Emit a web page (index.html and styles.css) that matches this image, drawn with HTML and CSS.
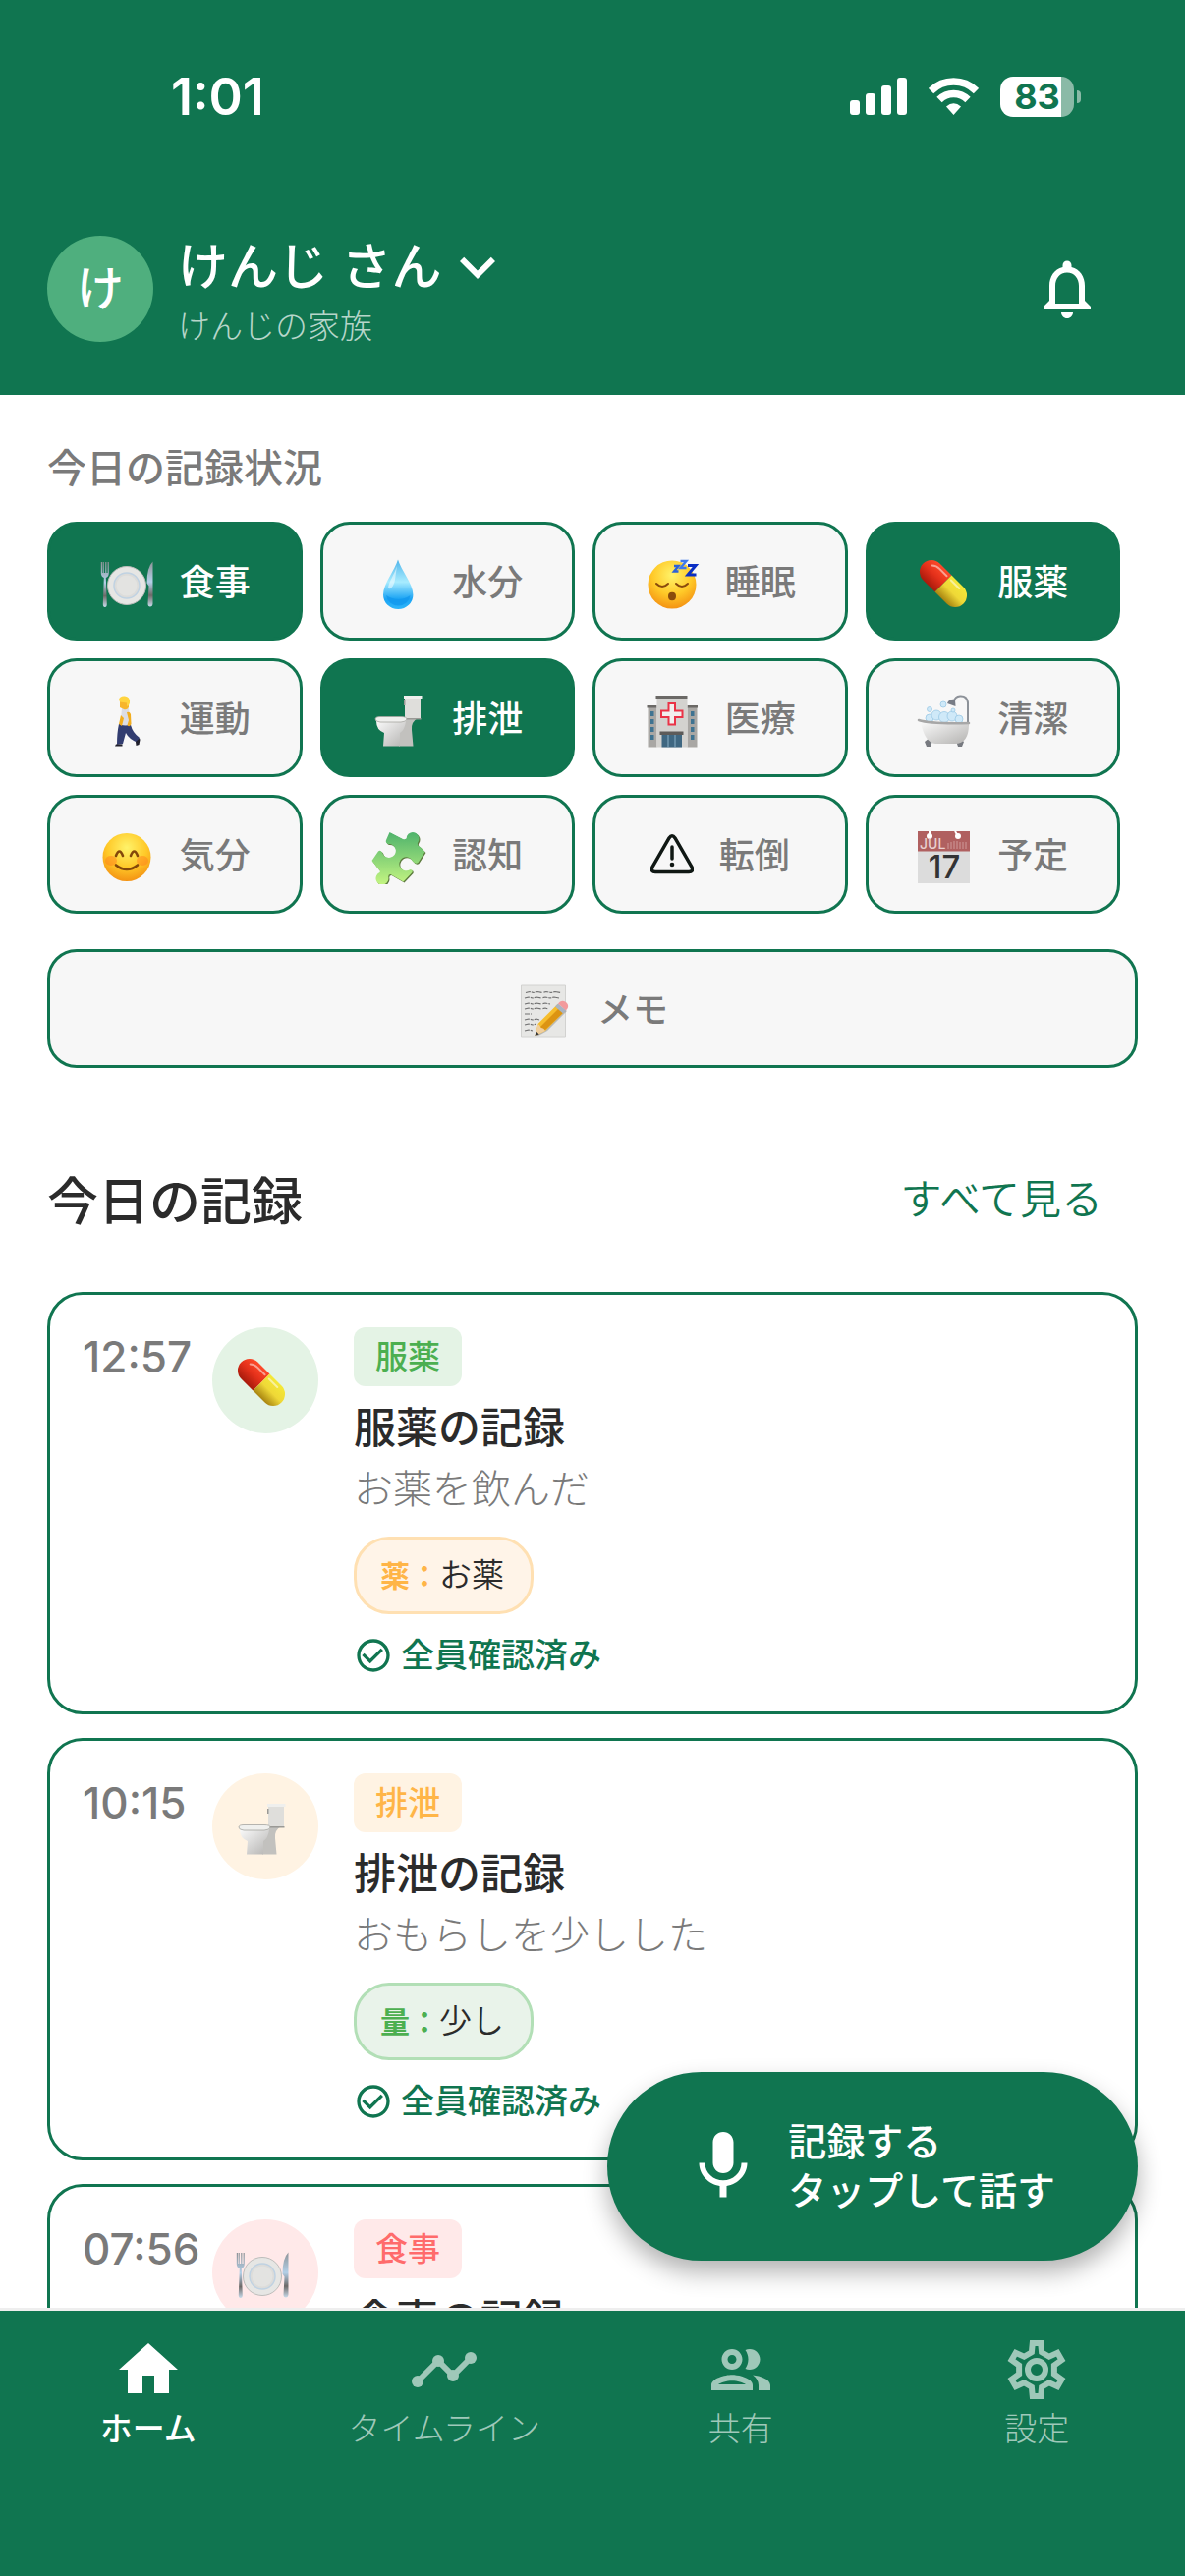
FILE: index.html
```
<!DOCTYPE html>
<html lang="ja">
<head>
  <meta charset="UTF-8">
  <meta name="viewport" content="width=device-width, initial-scale=1.0">
  <title>今日の記録</title>
  <link rel="stylesheet" href="styles.css">
</head>
<body>

  <!-- アイコン定義 -->
  <svg class="defs" aria-hidden="true">
    <defs>
      <linearGradient id="gWater" x1="0" y1="0" x2="0" y2="1">
        <stop offset="0" stop-color="#4fb4ea"/><stop offset="0.45" stop-color="#a8ecff"/><stop offset="0.8" stop-color="#1ba4f4"/><stop offset="1" stop-color="#2fb6fa"/>
      </linearGradient>
      <radialGradient id="gFace" cx="0.5" cy="0.3" r="0.75">
        <stop offset="0" stop-color="#fff36a"/><stop offset="0.55" stop-color="#ffc928"/><stop offset="1" stop-color="#f28a10"/>
      </radialGradient>
      <linearGradient id="gRed" x1="0" y1="0" x2="0" y2="1">
        <stop offset="0" stop-color="#ff4a2a"/><stop offset="0.5" stop-color="#e3301a"/><stop offset="1" stop-color="#a81a0c"/>
      </linearGradient>
      <linearGradient id="gYellow" x1="0" y1="0" x2="0" y2="1">
        <stop offset="0" stop-color="#f4e838"/><stop offset="0.5" stop-color="#efd837"/><stop offset="1" stop-color="#a88410"/>
      </linearGradient>
      <linearGradient id="gWhite" x1="0" y1="0" x2="1" y2="1">
        <stop offset="0" stop-color="#fafafa"/><stop offset="1" stop-color="#b4b3b1"/>
      </linearGradient>
      <linearGradient id="gSteel" x1="0" y1="0" x2="0" y2="1">
        <stop offset="0" stop-color="#8d9397"/><stop offset="0.45" stop-color="#b4d0e8"/><stop offset="0.75" stop-color="#6d6a68"/><stop offset="1" stop-color="#c8dbea"/>
      </linearGradient>
      <linearGradient id="gPuzzle" x1="0" y1="0" x2="0" y2="1">
        <stop offset="0" stop-color="#4fb36c"/><stop offset="1" stop-color="#c4f582"/>
      </linearGradient>
    </defs>

    <symbol id="meal" viewBox="0 0 56 60">
      <circle cx="28" cy="34" r="19.5" fill="#e6e6e4" stroke="#bdbdbb"/>
      <circle cx="28" cy="34" r="13" fill="#dcdcda" stroke="#c0d2e2" stroke-width="1.5"/>
      <circle cx="28" cy="34" r="10.5" fill="#e3e3e1"/>
      <path d="M1.8 10v11q0 4 3 5l-1 27q0 3 2 3t2-3l-1-27q3-1 3-5V10h-1.2v11H7.4V10H6.2v11H4.8V10H3.6v11H3V10z" fill="url(#gSteel)"/>
      <path d="M54.5 9.5q-6 6-6 22l2 3-1 18q0 3 2.4 3t2.6-3z" fill="url(#gSteel)"/>
    </symbol>
    <symbol id="water" viewBox="0 0 56 60">
      <path d="M27 7.5C24 18 12 32 12 43.5a15.2 14.5 0 0 0 30.4 0C42.4 32 30 18 27 7.5z" fill="url(#gWater)"/>
      <path d="M26 14c-3 9-8 16-9 22 2 4 6-2 7-8z" fill="#fff" opacity="0.5"/>
      <path d="M15 44a12.4 12 0 0 0 24.6 0q-12 8-24.6 0z" fill="#0f96ec" opacity="0.7"/>
    </symbol>
    <symbol id="sleep" viewBox="0 0 56 60">
      <circle cx="28" cy="33" r="24.5" fill="url(#gFace)"/>
      <g fill="none" stroke="#8a4b0c" stroke-width="2" stroke-linecap="round">
        <path d="M12 32q6 6 12 0M32 32q6 6 12 0"/>
      </g>
      <ellipse cx="28" cy="45" rx="4" ry="4.2" fill="#8a4b0c"/>
      <g fill="none" stroke-width="2.4">
        <path stroke="#2d62d8" d="M30 14h4.5l-4.5 5.5h4.5"/>
        <path stroke="#3f78ec" d="M36.5 9h6l-6 7h6"/>
        <path stroke="#0b2fc4" stroke-width="3" d="M44 13.5h8l-8 9.5h8.5"/>
      </g>
    </symbol>
    <symbol id="pill" viewBox="0 0 56 60">
      <g transform="rotate(45 27 32)">
        <path d="M27 20H10a12 12 0 0 0 0 24h17z" fill="url(#gRed)"/>
        <path d="M27 20h17a12 12 0 0 1 0 24H27z" fill="url(#gYellow)"/>
        <path d="M6 27q3-3 8-3h10M30 24h12" fill="none" stroke="#fff" stroke-width="2" stroke-linecap="round" opacity="0.5"/>
      </g>
    </symbol>
    <symbol id="walk" viewBox="0 0 56 60">
      <path d="M20 36l12 1q2 8 9 13l-2 5q-9-4-12-10l-3 11-6 1q0-12 2-21z" fill="#323d70"/>
      <path d="M17 56.5h6.5v2H16zM37 54l4-3.5.5 1.5-1 5-3 1z" fill="#20202c"/>
      <path d="M23 20q5-2 7 0l2.5 16.5q-6 2-11 0z" fill="#dcdde4"/>
      <path d="M28 24q3-1 4 2l.5 10q-2 4-4 1l1.5-5zM22 27l-2 9 3 2 2-8z" fill="#f2ad1e"/>
      <path d="M21 12h9v7q-2 3-5 2l-4-2z" fill="#f7b52c"/>
      <path d="M20 11q1-4 6-3.5 5.5.5 5 7-1 4-3 3v-3l-7-1z" fill="#ffd43f"/>
    </symbol>
    <symbol id="toilet" viewBox="0 0 56 60">
      <path d="M30 30h17q-7 4-6 12l1.5 16.5H28z" fill="#c2c1be"/>
      <path d="M34 9h16v21.5H34z" fill="#dfdedb"/>
      <path d="M33 7h18.5v3H33z" fill="#efefed"/>
      <path d="M33 30h17.5v1.5H33zM33 12h1.5v5H33z" fill="#9a9995"/>
      <path d="M5 33q0 9 8 12l-1 13.5h17V45q5-3 6-12z" fill="url(#gWhite)"/>
      <path d="M4 31q0-2.5 5-2.5h21q6 0 6 2.5t-6 3H9q-5-.5-5-3z" fill="#f0f0ee" stroke="#a5a4a0" stroke-width="0.8"/>
    </symbol>
    <symbol id="hospital" viewBox="0 0 56 60">
      <path d="M3.5 19h9v40.5h-9zM43.5 19h10v40.5h-10z" fill="#a9a7a4"/>
      <path d="M2.5 17h10v2.5h-10zM43.5 17h10.5v2.5H43.5zM11.5 7h32v3h-32z" fill="#6b6966"/>
      <path d="M12.5 10h31v49.5h-31z" fill="#d3d2cf"/>
      <path d="M6 23h3.5v5H6zm0 8h3.5v5H6zm0 8h3.5v5H6zm0 8h3.5v5H6zM47 23h3.5v5H47zm0 8h3.5v5H47zm0 8h3.5v5H47zm0 8h3.5v5H47z" fill="#3f7391"/>
      <path d="M24.5 15h6.5v7.5h7.5V29H31v7.5h-6.5V29H17v-6.5h7.5z" fill="#f1efee" stroke="#ea3347" stroke-width="2"/>
      <path d="M15.5 43.5h24V47h-24z" fill="#5d5b59"/>
      <path d="M17.5 47h20.5v12.5H17.5z" fill="#3f6781"/>
      <path d="M24 47v12.5M31 47v12.5" stroke="#8ab0c6"/>
    </symbol>
    <symbol id="bath" viewBox="0 0 56 60">
      <path d="M52 38V14q-1-7-8-6.5-5 .5-6 5" fill="none" stroke="#8d9299" stroke-width="2"/>
      <path d="M31 15q2-5 8-4l.5 7z" fill="#777c86"/>
      <g fill="#cfe9f8" stroke="#93c4e2" stroke-width="0.7">
        <circle cx="13" cy="30" r="4"/><circle cx="20" cy="27" r="5"/><circle cx="28" cy="29" r="5.5"/><circle cx="36" cy="28" r="5"/><circle cx="43" cy="31" r="4"/>
        <circle cx="13" cy="21" r="2.5"/><circle cx="27" cy="16" r="3"/><circle cx="37" cy="22" r="2"/>
      </g>
      <path d="M8 54l5-4 3 3-2 6h-4zM48 54l-5-4-3 3 2 6h4z" fill="#777a80"/>
      <path d="M4 34l49 2q0 20-14 20H19Q8 55 4 34z" fill="url(#gWhite)"/>
      <path d="M2 32q12 4 51 3" fill="none" stroke="#a7a7a7" stroke-width="2.5" stroke-linecap="round"/>
    </symbol>
    <symbol id="smile" viewBox="0 0 56 60">
      <circle cx="28" cy="32.5" r="24.5" fill="url(#gFace)"/>
      <ellipse cx="12" cy="36" rx="6" ry="5" fill="#ff7a1c" opacity="0.45"/>
      <ellipse cx="44" cy="36" rx="6" ry="5" fill="#ff7a1c" opacity="0.45"/>
      <g fill="none" stroke="#84480a" stroke-width="2.6" stroke-linecap="round">
        <path d="M17 31q3.5-9 7 0M32 31q3.5-9 7 0M17 40.5q11 9 22 0"/>
      </g>
    </symbol>
    <symbol id="puzzle" viewBox="0 0 56 60">
      <path d="M18.5 7L32 14q4 1 4-3a6.5 6.5 0 1 1 11.5 6q-2 3 2 5l5 5-7 11q-3 2-6-2a7 7 0 1 0-2 9q3 0 2 3l-9 9.5L19.5 50q-3 0-2 4a6.5 6.5 0 1 1-9-6q1-2-1.5-3.5L.5 36 7 26.5q2-2 4 1a7 7 0 1 0 6-8.5q-3-1-2-4z" fill="#5c7a3d" transform="translate(1 1)"/>
      <path d="M18.5 7L32 14q4 1 4-3a6.5 6.5 0 1 1 11.5 6q-2 3 2 5l5 5-7 11q-3 2-6-2a7 7 0 1 0-2 9q3 0 2 3l-9 9.5L19.5 50q-3 0-2 4a6.5 6.5 0 1 1-9-6q1-2-1.5-3.5L.5 36 7 26.5q2-2 4 1a7 7 0 1 0 6-8.5q-3-1-2-4z" fill="url(#gPuzzle)"/>
    </symbol>
    <symbol id="warn" viewBox="0 0 44 60">
      <path d="M19 13q3-4.5 6 0l17 29.5q2 5-3 5H5q-5 0-3-5z" fill="none" stroke="#101814" stroke-width="3.5"/>
      <path d="M22 22v12" stroke="#101814" stroke-width="3.5" stroke-linecap="round"/>
      <circle cx="22" cy="40" r="2.3" fill="#101814"/>
    </symbol>
    <symbol id="memo" viewBox="0 0 56 60">
      <path d="M4.5 6h45v53h-45z" fill="#e7e7e5" stroke="#d2d2d0"/>
      <g fill="none" stroke="#707070" stroke-width="1.2" stroke-dasharray="5 1 3 1 7 2">
        <path d="M9 13.5l4-1 4 1 4-1 5 1 4-1 5 1 4-1 6 1M8 19l4-1 4 1 4-1 5 1 4-1 5 1 4-1 5 1M8 25l4-1 4 1 4-1 5 1 4-1 5 1M8 30l4-1 4 1 4-1 5 1 4-1 3 1M8 35h7M8 41l4-1 4 1 4-1 3 1M8 46l4-1 4 1 4-1M8 52l4-1 4 1"/>
      </g>
      <path d="M20 58l3-12 20-20 8 6-20 20z" fill="#8a8a88" opacity="0.5"/>
      <path d="M18.5 57l3-12 20-20 7.5 7-20 20z" fill="#f6bd2c"/>
      <path d="M28 52l-4-4 20-20 5 4z" fill="#dc9412"/>
      <path d="M18.5 57l3-12q2 1 3 4 3 0 4.5 3z" fill="#f0cf9e"/>
      <path d="M18.5 57l1.2-4.5 3 3z" fill="#333"/>
      <path d="M39 27.5l3-3 8 7-3 3z" fill="#a9b4c2"/>
      <path d="M42 24.5q3-4.500 8-1.500 4.500 4 0 8.500z" fill="#f39a9c"/>
    </symbol>
    <symbol id="check" viewBox="0 0 24 24">
      <path fill="currentColor" d="M16.59 7.58L10 14.17l-3.59-3.58L5 12l5 5 8-8zM12 2C6.48 2 2 6.48 2 12s4.480 10 10 10 10-4.480 10-10S17.520 2 12 2zm0 18c-4.420 0-8-3.580-8-8s3.580-8 8-8 8 3.580 8 8-3.580 8-8 8z"/>
    </symbol>
  </svg>

  <div class="app">
    <header class="header">
      <div class="status-bar">
        <span class="clock">1:01</span>
        <div class="status-icons">
          <svg class="signal" viewBox="0 0 58 38" fill="#fff">
            <rect x="0" y="23" width="10" height="15" rx="3"/>
            <rect x="16" y="16" width="10" height="22" rx="3"/>
            <rect x="32" y="8" width="10" height="30" rx="3"/>
            <rect x="48" y="0" width="10" height="38" rx="3"/>
          </svg>
          <svg class="wifi" viewBox="0 0 51 38">
            <g fill="none" stroke="#fff" stroke-width="7.5">
              <path d="M2.5 13.5a32.5 32.5 0 0 1 46 0"/>
              <path d="M11 22.5a20.5 20.5 0 0 1 29 0"/>
            </g>
            <path d="M25.5 38l-7.5-8.5q7.5-6.5 15 0z" fill="#fff"/>
          </svg>
          <span class="battery">83</span>
        </div>
      </div>

      <div class="profile">
        <div class="avatar">け</div>
        <div class="profile-text">
          <button class="profile-name" type="button">けんじ さん
            <svg viewBox="0 0 24 24"><path fill="#fff" d="M7.41 8.59L12 13.17l4.59-4.58L18 10l-6 6-6-6z"/></svg>
          </button>
          <p class="profile-sub">けんじの家族</p>
        </div>
        <button class="bell" type="button" aria-label="通知">
          <svg viewBox="0 0 24 24"><path fill="#fff" d="M12 22c1.1 0 2-.9 2-2h-4c0 1.1.9 2 2 2zm6-6v-5c0-3.07-1.63-5.64-4.5-6.32V4c0-.83-.67-1.5-1.5-1.5s-1.5.67-1.5 1.5v.68C7.64 5.36 6 7.92 6 11v5l-2 2v1h16v-1l-2-2zm-2 1H8v-6c0-2.48 1.51-4.5 4-4.5s4 2.02 4 4.5v6z"/></svg>
        </button>
      </div>
    </header>

    <main class="main">
      <h2 class="sub-title">今日の記録状況</h2>
      <div class="category-grid">
        <button class="category done" type="button"><svg><use href="#meal"/></svg>食事</button>
        <button class="category" type="button"><svg><use href="#water"/></svg>水分</button>
        <button class="category" type="button"><svg><use href="#sleep"/></svg>睡眠</button>
        <button class="category done" type="button"><svg><use href="#pill"/></svg>服薬</button>
        <button class="category" type="button"><svg><use href="#walk"/></svg>運動</button>
        <button class="category done" type="button"><svg><use href="#toilet"/></svg>排泄</button>
        <button class="category" type="button"><svg><use href="#hospital"/></svg>医療</button>
        <button class="category" type="button"><svg><use href="#bath"/></svg>清潔</button>
        <button class="category" type="button"><svg><use href="#smile"/></svg>気分</button>
        <button class="category" type="button"><svg><use href="#puzzle"/></svg>認知</button>
        <button class="category" type="button"><svg class="narrow"><use href="#warn"/></svg>転倒</button>
        <button class="category" type="button">
          <svg viewBox="0 0 56 60">
            <path d="M1 6h53v53H1z" fill="#dcdcdc"/>
            <path d="M1 6h53v20.5H1z" fill="#b06060"/>
            <circle cx="13" cy="11" r="3" fill="#fff"/><circle cx="42" cy="11" r="3" fill="#fff"/>
            <path d="M13 6v5M39 6l3 5" stroke="#fff" stroke-width="2"/>
            <path d="M32 18v6m3-7v7m3-8v8m3-8v8m3-7v7m3-7v7m3-7v7" stroke="#cf9a9a"/>
            <text class="cal-month" x="3" y="24">JUL</text>
            <text class="cal-day" x="28" y="54" text-anchor="middle">17</text>
          </svg>
          予定
        </button>
      </div>
      <button class="category memo" type="button"><svg><use href="#memo"/></svg>メモ</button>

      <div class="section-head">
        <h1>今日の記録</h1>
        <a href="#">すべて見る</a>
      </div>

      <div class="record-list">
        <article class="record">
          <time class="record-time">12:57</time>
          <div class="record-icon green"><svg><use href="#pill"/></svg></div>
          <div class="record-body">
            <span class="badge green">服薬</span>
            <h3>服薬の記録</h3>
            <p class="record-text">お薬を飲んだ</p>
            <div class="detail orange"><b>薬：</b>お薬</div>
            <p class="confirmed"><svg><use href="#check"/></svg>全員確認済み</p>
          </div>
        </article>

        <article class="record">
          <time class="record-time">10:15</time>
          <div class="record-icon orange"><svg><use href="#toilet"/></svg></div>
          <div class="record-body">
            <span class="badge orange">排泄</span>
            <h3>排泄の記録</h3>
            <p class="record-text">おもらしを少しした</p>
            <div class="detail green"><b>量：</b>少し</div>
            <p class="confirmed"><svg><use href="#check"/></svg>全員確認済み</p>
          </div>
        </article>

        <article class="record">
          <time class="record-time">07:56</time>
          <div class="record-icon red"><svg><use href="#meal"/></svg></div>
          <div class="record-body">
            <span class="badge red">食事</span>
            <h3>食事の記録</h3>
          </div>
        </article>
      </div>

      <!-- 音声入力ボタン -->
      <button class="fab" type="button">
        <svg viewBox="0 0 24 24"><path fill="#fff" d="M12 14c1.66 0 3-1.34 3-3V5c0-1.66-1.34-3-3-3S9 3.34 9 5v6c0 1.66 1.34 3 3 3zm5.3-3c0 3-2.54 5.1-5.3 5.1S6.7 14 6.7 11H5c0 3.41 2.72 6.23 6 6.72V21h2v-3.28c3.28-.48 6-3.3 6-6.72h-1.7z"/></svg>
        <span>記録する<br>タップして話す</span>
      </button>
    </main>

    <nav class="tab-bar">
      <a class="active" href="#">
        <svg viewBox="0 0 24 24"><path fill="currentColor" d="M10 20v-6h4v6h5v-8h3L12 3 2 12h3v8z"/></svg>
        ホーム
      </a>
      <a href="#">
        <svg viewBox="0 0 24 24">
          <path d="M3 16l7-7 5 5 6-6" fill="none" stroke="currentColor" stroke-width="2"/>
          <g fill="currentColor"><circle cx="3" cy="16" r="2"/><circle cx="10" cy="9" r="2"/><circle cx="15" cy="14" r="2"/><circle cx="21" cy="8" r="2"/></g>
        </svg>
        タイムライン
      </a>
      <a href="#">
        <svg viewBox="0 0 24 24"><path fill="currentColor" d="M9 13.75c-2.34 0-7 1.17-7 3.5V19h14v-1.75c0-2.33-4.66-3.5-7-3.5zM4.34 17c.84-.58 2.87-1.25 4.66-1.25s3.82.67 4.66 1.25H4.34zM9 12c1.93 0 3.5-1.57 3.5-3.5S10.93 5 9 5 5.5 6.57 5.5 8.5 7.07 12 9 12zm0-5c.83 0 1.5.67 1.5 1.5S9.83 10 9 10s-1.5-.67-1.5-1.5S8.17 7 9 7zm7.04 6.81c1.16.84 1.96 1.96 1.96 3.44V19h4v-1.75c0-2.02-3.5-3.17-5.96-3.44zM15 12c1.93 0 3.5-1.57 3.5-3.5S16.93 5 15 5c-.54 0-1.04.13-1.5.35.63.89 1 1.98 1 3.15s-.37 2.26-1 3.15c.46.22.96.35 1.5.35z"/></svg>
        共有
      </a>
      <a href="#">
        <svg viewBox="0 0 24 24" fill="none" stroke="currentColor" stroke-width="2">
          <path d="M10.3 6.1L10.6 3h2.8l.3 3.1 2.56 1.48 2.83-1.29 1.4 2.42-2.53 1.81v2.96l2.53 1.81-1.4 2.42-2.83-1.29-2.56 1.48-.3 3.1h-2.8l-.3-3.1-2.56-1.48-2.83 1.29-1.4-2.42 2.53-1.81v-2.96L3.51 8.71l1.4-2.42 2.83 1.29z"/>
          <circle cx="12" cy="12" r="3"/>
        </svg>
        設定
      </a>
    </nav>
  </div>

</body>
</html>
```
FILE: styles.css
```
* {
  box-sizing: border-box;
  margin: 0;
  padding: 0;
}

body {
  font-family: Inter, "Noto Sans CJK JP", sans-serif;
  background-color: #fff;
  color: #2b2b2b;
}

button {
  font: inherit;
  color: inherit;
  background: none;
  border: none;
  cursor: pointer;
}

a {
  text-decoration: none;
}

svg {
  display: block;
  flex-shrink: 0;
}

.defs {
  position: absolute;
  width: 0;
  height: 0;
}

.app {
  display: flex;
  flex-direction: column;
  height: 100vh;
  overflow: hidden;
}

/* ヘッダー */
.header {
  background-color: #107550;
  color: #fff;
  padding: 0 48px 54px;
}

.status-bar {
  display: flex;
  justify-content: space-between;
  align-items: center;
  height: 196px;
  padding: 0 58px 0 126px;
}

.clock {
  font-size: 52px;
  font-weight: 600;
}

.status-icons {
  display: flex;
  align-items: center;
  gap: 22px;
}

.signal {
  width: 58px;
  height: 38px;
}

.wifi {
  width: 51px;
  height: 38px;
}

.battery {
  position: relative;
  width: 75px;
  height: 41px;
  margin-right: 7px;
  border-radius: 13px;
  background: linear-gradient(to right, #fff 62px, #8abaa7 62px);
  color: #107550;
  font-size: 36px;
  font-weight: 700;
  line-height: 41px;
  text-align: center;
}

.battery::after {
  content: "";
  position: absolute;
  right: -7px;
  top: 14px;
  width: 4px;
  height: 13px;
  border-radius: 0 4px 4px 0;
  background-color: #8abaa7;
}

.profile {
  display: flex;
  align-items: center;
  height: 108px;
  margin-top: 44px;
}

.avatar {
  width: 108px;
  height: 108px;
  margin-right: 25px;
  border-radius: 50%;
  background-color: #4faf7e;
  font-size: 48px;
  font-weight: 500;
  line-height: 108px;
  text-align: center;
}

.profile-text {
  flex: 1;
  padding-top: 3px;
}

.profile-name {
  display: flex;
  align-items: center;
  font-size: 51px;
  font-weight: 500;
  line-height: 66px;
}

.profile-name svg {
  width: 72px;
  height: 72px;
}

.profile-sub {
  color: #b7d6ca;
  font-size: 33px;
  font-weight: 300;
  line-height: 48px;
}

.bell {
  padding: 0 36px;
}

.bell svg {
  width: 72px;
  height: 72px;
}

/* メイン */
.main {
  position: relative;
  flex: 1;
  min-height: 0;
  overflow: hidden;
  padding: 45px 48px 0;
}

.sub-title {
  margin-bottom: 24px;
  color: #7a7a7a;
  font-size: 40px;
  font-weight: 500;
  line-height: 60px;
}

.category-grid {
  display: grid;
  grid-template-columns: repeat(4, 1fr);
  gap: 18px;
  padding-right: 18px;
}

.category {
  display: flex;
  justify-content: center;
  align-items: center;
  gap: 26px;
  height: 121px;
  padding-bottom: 4px;
  border: 3px solid #107550;
  border-radius: 30px;
  background-color: #f7f7f7;
  color: #7a7a7a;
  font-size: 36px;
  font-weight: 500;
}

.category svg {
  width: 56px;
  height: 60px;
  margin-top: 4px;
}

.category .narrow {
  width: 44px;
}

.category.done {
  background-color: #107550;
  color: #fff;
}

.category.memo {
  width: 100%;
  margin-top: 36px;
}

.cal-month {
  fill: #e8cfcf;
  font-size: 14px;
}

.cal-day {
  fill: #333;
  font-size: 33px;
  font-weight: 500;
}

.section-head {
  display: flex;
  justify-content: space-between;
  align-items: center;
  height: 144px;
  margin: 62px 0 22px;
  padding-bottom: 4px;
}

.section-head h1 {
  font-size: 52px;
  font-weight: 500;
}

.section-head a {
  padding: 0 36px 4px;
  color: #107550;
  font-size: 42px;
  font-weight: 350;
}

/* 記録カード */
.record-list {
  display: flex;
  flex-direction: column;
  gap: 24px;
}

.record {
  display: flex;
  min-height: 429px;
  padding: 33px;
  border: 3px solid #107550;
  border-radius: 36px;
}

.record-time {
  width: 132px;
  color: #7a7a7a;
  font-size: 44px;
  font-weight: 500;
  line-height: 60px;
}

.record-icon {
  display: flex;
  justify-content: center;
  align-items: center;
  width: 108px;
  height: 108px;
  margin-right: 36px;
  padding-right: 6px;
  border-radius: 50%;
}

.record-icon svg {
  width: 56px;
  height: 60px;
}

.record-icon.green,
.badge.green {
  background-color: #e4f3e5;
  color: #4caf50;
}

.record-icon.orange,
.badge.orange {
  background-color: #fff3e3;
  color: #ffb547;
}

.record-icon.red,
.badge.red {
  background-color: #ffe9e9;
  color: #ff6b6b;
}

.record-body {
  flex: 1;
}

.badge {
  display: block;
  width: fit-content;
  padding: 0 22px;
  border-radius: 12px;
  font-size: 33px;
  font-weight: 500;
  line-height: 60px;
}

.record h3 {
  margin-top: 12px;
  font-size: 43px;
  font-weight: 500;
  line-height: 60px;
}

.record-text {
  margin-top: 6px;
  color: #7a7a7a;
  font-size: 40px;
  font-weight: 300;
  line-height: 54px;
}

.detail {
  width: fit-content;
  margin: 21px 0 18px;
  padding: 0 27px 0 24px;
  border: 3px solid;
  border-radius: 36px;
  color: #2b2b2b;
  font-size: 33px;
  font-weight: 350;
  line-height: 72px;
}

.detail b {
  font-size: 30px;
  font-weight: 700;
}

.detail.orange {
  background-color: #fff4e8;
  border-color: #ffe0b2;
}

.detail.orange b {
  color: #ffb547;
}

.detail.green {
  background-color: #e9f3ea;
  border-color: #b2dfb6;
}

.detail.green b {
  color: #4caf50;
}

.confirmed {
  display: flex;
  align-items: center;
  gap: 8px;
  color: #107550;
  font-size: 34px;
  font-weight: 500;
  line-height: 48px;
}

.confirmed svg {
  width: 40px;
  height: 40px;
}

.fab {
  position: absolute;
  right: 48px;
  bottom: 48px;
  display: flex;
  align-items: center;
  gap: 24px;
  height: 192px;
  padding: 0 84px 0 76px;
  border-radius: 96px;
  background-color: #107550;
  box-shadow: 0 12px 24px rgba(0, 0, 0, 0.3);
  color: #fff;
  font-size: 39px;
  font-weight: 500;
  line-height: 50px;
  text-align: left;
}

.fab svg {
  width: 84px;
  height: 84px;
}

/* 下部タブ */
.tab-bar {
  display: grid;
  grid-template-columns: repeat(4, 1fr);
  padding: 24px 0 126px;
  border-top: 3px solid #eee;
  background-color: #107550;
}

.tab-bar a {
  display: flex;
  flex-direction: column;
  align-items: center;
  color: #9fc8b9;
  font-size: 33px;
  font-weight: 300;
  line-height: 48px;
}

.tab-bar a.active {
  color: #fff;
  font-weight: 500;
}

.tab-bar svg {
  width: 72px;
  height: 72px;
}
```
